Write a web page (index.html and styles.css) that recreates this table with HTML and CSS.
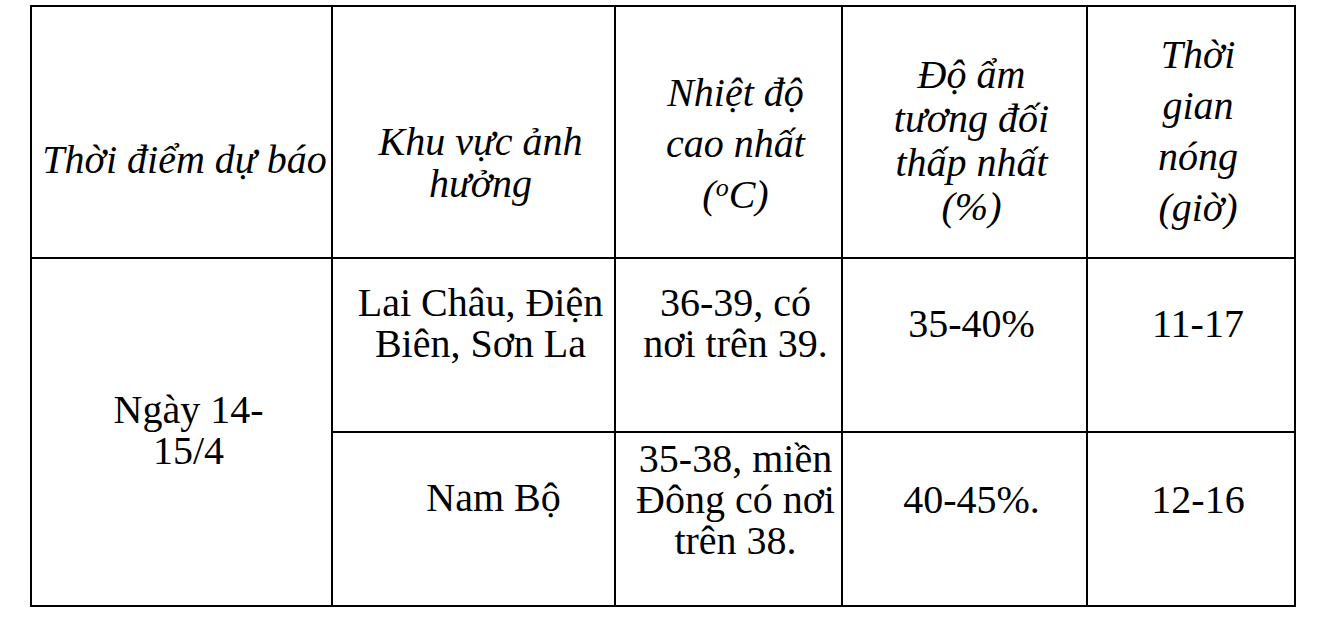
FILE: index.html
```html
<!DOCTYPE html>
<html lang="vi">
<head>
<meta charset="utf-8">
<title>Dự báo nắng nóng</title>
<link rel="stylesheet" href="styles.css">
</head>
<body>
<table class="forecast">
  <colgroup>
    <col class="c1">
    <col class="c2">
    <col class="c3">
    <col class="c4">
    <col class="c5">
  </colgroup>
  <tr class="row-head">
    <th class="h h1">Thời điểm dự báo</th>
    <th class="h h2">Khu vực ảnh<br>hưởng</th>
    <th class="h h3">Nhiệt độ<br>cao nhất<br>(<sup>o</sup>C)</th>
    <th class="h h4">Độ ẩm<br>tương đối<br>thấp nhất<br>(%)</th>
    <th class="h h5">Thời<br>gian<br>nóng<br>(giờ)</th>
  </tr>
  <tr class="row-body">
    <td class="cell span" rowspan="2">Ngày 14-<br>15/4</td>
    <td class="cell">Lai Châu, Điện<br>Biên, Sơn La</td>
    <td class="cell">36-39, có<br>nơi trên 39.</td>
    <td class="cell">35-40%</td>
    <td class="cell">11-17</td>
  </tr>
  <tr class="row-body row-last">
    <td class="cell shift">Nam Bộ</td>
    <td class="cell">35-38, miền<br>Đông có nơi<br>trên 38.</td>
    <td class="cell">40-45%.</td>
    <td class="cell">12-16</td>
  </tr>
</table>
</body>
</html>
```

FILE: styles.css
```css
html, body {
  margin: 0;
  padding: 0;
  background: #ffffff;
}

body {
  padding: 5px 0 0 30px;
  font-family: "Liberation Serif", "Times New Roman", serif;
  color: #000000;
}

.forecast {
  border-collapse: collapse;
  table-layout: fixed;
  width: 1266px;
  font-family: "Liberation Serif", "Times New Roman", serif;
  font-size: 40px;
}

.c1 { width: 301px; }
.c2 { width: 283px; }
.c3 { width: 227px; }
.c4 { width: 245px; }
.c5 { width: 208px; }

.forecast th,
.forecast td {
  border: 2px solid #000000;
  text-align: center;
  vertical-align: middle;
  white-space: nowrap;
}

.row-head { height: 252px; }
.row-body { height: 174px; }

.h {
  font-style: italic;
  font-weight: normal;
  padding: 0 4px 0 18px;
}

.h1 { line-height: 41px; padding-top: 54px; padding-left: 6px; padding-right: 0; }
.h2 { line-height: 42px; padding-top: 62px; }
.h3 { line-height: 51px; padding-top: 22px; }
.h4 { line-height: 44px; padding-top: 18px; }
.h5 { line-height: 51px; padding-bottom: 2px; }

.h3 sup {
  font-size: 26px;
  line-height: 0;
  vertical-align: 12px;
}

.cell {
  line-height: 41px;
  padding: 0 4px 44px 18px;
}

.row-last .cell {
  padding-bottom: 40px;
}

.cell.span {
  padding-bottom: 4px;
}

.row-last .cell.shift {
  padding-left: 44px;
  padding-bottom: 44px;
}
```
